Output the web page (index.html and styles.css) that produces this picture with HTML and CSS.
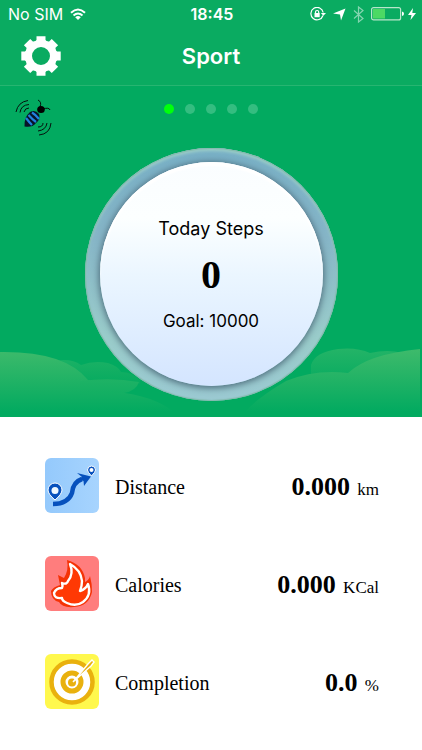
FILE: index.html
```html
<!DOCTYPE html>
<html lang="en">
<head>
<meta charset="utf-8">
<meta name="viewport" content="width=device-width, initial-scale=1">
<title>Sport</title>
<link rel="stylesheet" href="styles.css">
</head>
<body>
<header class="header">
  <div class="status">
    <div class="status-left">
      <span>No SIM</span>
      <svg width="16" height="13" viewBox="0 0 16 13" fill="none" stroke="#fff" stroke-width="2" aria-hidden="true">
        <path d="M1 4.700Q8-1.700 15 4.700M3.500 7.500Q8 3.500 12.500 7.500"/>
        <path d="M5.200 9.200Q8 6.800 10.800 9.200L8 12z" fill="#fff" stroke="none"/>
      </svg>
    </div>
    <span class="status-time">18:45</span>
    <div class="status-right">
      <svg width="16" height="14" viewBox="0 0 16 14" fill="none" stroke="#fff" stroke-width="1.200" aria-hidden="true">
        <path d="M13 8.500A6.200 6.200 0 1 1 13.200 5.500"/>
        <path d="M10.800 6H16L13.400 8.800z" fill="#fff" stroke="none"/>
        <rect x="4.500" y="6" width="5.200" height="4.200" fill="#fff" stroke="none"/>
        <path d="M5.500 6.200V5Q5.500 3.500 7.100 3.500T8.700 5V6.200"/>
      </svg>
      <svg width="13" height="13" viewBox="0 0 13 13" fill="#fff" aria-hidden="true"><path d="M12.500.5L8 12.500 7 6.400 0 5.600z"/></svg>
      <svg class="dim" width="11" height="17" viewBox="0 0 11 17" fill="none" stroke="#fff" stroke-width="1.200" aria-hidden="true"><path d="M1 4.500L10 12.500 5.500 16V1L10 4.500 1 12.500"/></svg>
      <svg class="battery" width="34" height="14" viewBox="0 0 34 14" aria-hidden="true">
        <rect x=".6" y=".6" width="29" height="12.300" rx="2" fill="none" stroke="#b8e6ca" stroke-width="1.200"/>
        <rect x="2" y="2" width="12" height="9.500" fill="#4cd964"/>
        <path d="M31 4.500Q33 5 33 6.800T31 9z" fill="#fff"/>
      </svg>
      <svg width="8" height="12" viewBox="0 0 8 12" fill="#fff" aria-hidden="true"><path d="M5 0L0 7H3.500L2.500 12 8 5H4.300z"/></svg>
    </div>
  </div>
  <nav class="nav">
    <button class="icon-button" type="button" aria-label="Settings">
      <svg width="40" height="40" viewBox="-20 -20 40 40" aria-hidden="true">
        <circle r="12.500" fill="none" stroke="#fff" stroke-width="7"/>
        <g fill="#fff">
          <path id="tooth" d="M-6.500-14L-4.500-16V-19.700H4.500V-16L6.500-14z"/>
          <use href="#tooth" transform="rotate(45)"/><use href="#tooth" transform="rotate(90)"/>
          <use href="#tooth" transform="rotate(135)"/><use href="#tooth" transform="rotate(180)"/>
          <use href="#tooth" transform="rotate(225)"/><use href="#tooth" transform="rotate(270)"/>
          <use href="#tooth" transform="rotate(315)"/>
        </g>
      </svg>
    </button>
    <h1 class="title">Sport</h1>
  </nav>
</header>

<main>
  <section class="hero">
    <svg class="hills" viewBox="0 0 422 75" preserveAspectRatio="none" aria-hidden="true">
      <defs>
        <linearGradient id="front" gradientUnits="userSpaceOnUse" x1="0" y1="8" x2="0" y2="70"><stop offset="0" stop-color="#3dba6b"/><stop offset=".5" stop-color="#20b265"/><stop offset="1" stop-color="#02aa60"/></linearGradient>
        <linearGradient id="back" gradientUnits="userSpaceOnUse" x1="0" y1="5" x2="0" y2="42"><stop offset="0" stop-color="#25b467"/><stop offset="1" stop-color="#06ab60"/></linearGradient>
        <linearGradient id="lobe" gradientUnits="userSpaceOnUse" x1="0" y1="37" x2="0" y2="56"><stop offset="0" stop-color="#1fb265"/><stop offset="1" stop-color="#0fae62"/></linearGradient>
      </defs>
      <path fill="url(#back)" d="M50 20Q70 15 81 23Q94 18 108 21Q118 24 121 30Q132 30 140 38V42H50zM311 23Q315 10 338 7Q357 5 370 11Q395 5 416 16V45H311z"/>
      <path fill="url(#front)" d="M0 10Q65 9 88 38L125 51Q160 56 180 75H0zM240 75Q255 57 286 39Q315 27 348 31Q368 12 420 7V75z"/>
      <path fill="url(#lobe)" d="M80 39Q112 35 139 40Q136 49 124 51L80 53z"/>
    </svg>
    <div class="hero-top">
      <button class="icon-button" type="button" aria-label="Bee">
        <svg width="38" height="38" viewBox="0 0 38 38" fill="none" stroke="#06100c" stroke-width="1" aria-hidden="true">
          <path d="M1 14Q3 4 13 2.500M5 14.500Q6 7 14 6.500M9 14Q10 10 14 10"/>
          <path d="M36 25Q35 36 24 37M32 25Q31 32 23 33M28 25Q28 29 23 29M23 2Q27 4 25 9M28 11Q34 9 35 12"/>
          <ellipse cx="26" cy="11.500" rx="3.800" ry="3.600" fill="#000" stroke="none"/>
          <path d="M15 14Q20 11 24 16Q26 21 21 25Q17 30 9.500 28.500Q9 19 15 14z" fill="#081428" stroke="none"/>
          <path d="M17 14.500Q21 17 24 21M13.500 17Q17 21 21 24M11 20Q14 24 17 27" stroke="#2180de" stroke-width="2.200"/>
        </svg>
      </button>
      <div class="dots" aria-hidden="true">
        <span class="dot dot-active"></span><span class="dot"></span><span class="dot"></span><span class="dot"></span><span class="dot"></span>
      </div>
    </div>
    <div class="dial">
      <div class="dial-face">
        <p class="dial-text">Today Steps</p>
        <p class="dial-value">0</p>
        <p class="dial-text dial-goal">Goal: 10000</p>
      </div>
    </div>
  </section>

  <section class="stats">
    <div class="stat">
      <svg class="stat-icon" viewBox="0 0 54 55" aria-hidden="true">
        <defs><linearGradient id="sky"><stop offset="0" stop-color="#94c9fc"/><stop offset="1" stop-color="#a7d4fe"/></linearGradient></defs>
        <rect width="54" height="55" rx="6" fill="url(#sky)"/>
        <path d="M8 46Q23 46 27 35Q28 24 37 21" fill="none" stroke="#0751bd" stroke-width="4.500"/>
        <path d="M32 15L46 18.500 39 28 38.500 23 34 21 37 19z" fill="#0751bd"/>
        <g fill="#0751bd" stroke="#fff" stroke-width="1">
          <path d="M10 42Q3 36 3 32A7 7 0 0 1 17 32Q17 36 10 42z"/><circle cx="10" cy="32.500" r="3.500" fill="#eff8ff" stroke="none"/>
          <path d="M46.500 18Q42.500 14 42.500 12A4 4 0 0 1 50.500 12Q50.500 14 46.500 18z"/><circle cx="46.500" cy="12" r="2" fill="#fff" stroke="none"/>
        </g>
      </svg>
      <h2 class="stat-name">Distance</h2>
      <p class="stat-value"><strong>0.000</strong> km</p>
    </div>
    <div class="stat">
      <svg class="stat-icon" viewBox="0 0 54 55" aria-hidden="true">
        <rect width="54" height="55" rx="6" fill="#ff7d7d"/>
        <path d="M22 4Q37 8 40 22L40 26Q44 24 45 20Q47 27 47 36Q44 50 29 51Q17 52 14 46Q6 44 6 35Q8 31 15 29L13 19 19 22Q24 14 22 4z" fill="#f53205"/>
        <path d="M25 8Q36 14 37 25Q37 30 35 35Q41 33 43 28Q47 39 38 46Q31 51 22 47Q17 45 17 42Q9 43 9 37Q11 32 17 32Q18 30 17 27Q22 29 23 25Q29 18 25 8z" fill="#ff3904" stroke="#fff" stroke-width="2.400" stroke-linejoin="round"/>
      </svg>
      <h2 class="stat-name">Calories</h2>
      <p class="stat-value"><strong>0.000</strong> KCal</p>
    </div>
    <div class="stat">
      <svg class="stat-icon" viewBox="0 0 54 55" aria-hidden="true">
        <rect width="54" height="55" rx="6" fill="#fff84d"/>
        <circle cx="27" cy="28" r="20.500" fill="#fff" stroke="#e9b10e" stroke-width="4.500"/>
        <circle cx="27" cy="28" r="9" fill="#fff" stroke="#e9b10e" stroke-width="5"/>
        <circle cx="27" cy="28.500" r="4" fill="#e9b10e"/>
        <path d="M28 28L43 10 47 6 49 8 46 12z" fill="#e9b10e" stroke="#fff" stroke-width="1.400"/>
      </svg>
      <h2 class="stat-name">Completion</h2>
      <p class="stat-value"><strong>0.0</strong> %</p>
    </div>
  </section>
</main>
</body>
</html>
```
FILE: styles.css
```css
* {
  box-sizing: border-box;
}

body {
  margin: 0;
  background: #fff;
  color: #000;
  font-family: Inter, "Liberation Sans", sans-serif;
}

h1,
h2,
p {
  margin: 0;
  font-weight: 400;
}

svg {
  display: block;
}

.header {
  background: #0aab61;
  border-bottom: 1px solid #27b571;
  color: #fff;
}

.status {
  display: grid;
  grid-template-columns: 1fr auto 1fr;
  align-items: center;
  height: 28px;
  padding: 0 6px 0 8px;
  font-size: 16px;
}

.status-left,
.status-right {
  display: flex;
  align-items: center;
  gap: 7px;
}

.status-right {
  justify-content: flex-end;
}

.status-time {
  font-weight: 600;
}

.dim {
  opacity: 0.5;
}

.battery {
  margin-right: -4px;
}

.nav {
  display: grid;
  grid-template-columns: 1fr auto 1fr;
  align-items: center;
  height: 57px;
  padding: 0 21px 2px;
}

.icon-button {
  justify-self: start;
  padding: 0;
  border: 0;
  background: none;
}

.title {
  font-size: 22px;
  font-weight: 600;
}

.hero {
  position: relative;
  padding-bottom: 16px;
  background: #02aa60;
}

.hills {
  position: absolute;
  bottom: 0;
  left: 0;
  width: 100%;
  height: 75px;
}

.hero-top {
  display: grid;
  grid-template-columns: 1fr auto 1fr;
  align-items: start;
  height: 62px;
  padding: 12px 15px 0;
}

.dots {
  display: flex;
  gap: 11px;
  padding-top: 6px;
}

.dot {
  width: 10px;
  height: 10px;
  border-radius: 50%;
  background: #34bd80;
}

.dot-active {
  background: #00ff0c;
}

.dial {
  position: relative;
  width: 253px;
  margin: 0 auto;
  padding: 14px 15px 15px;
  border-radius: 50%;
  background: linear-gradient(#78b0c6, #86b5c7 35%, #9accca 75%, #9bc9d2);
  box-shadow: inset 0 0 1px 1px #83b9ac, inset 0 3px 3px #9bcdc8;
}

.dial-face {
  display: flex;
  flex-direction: column;
  align-items: center;
  height: 224px;
  padding-top: 55px;
  border-radius: 50%;
  background: linear-gradient(#fafdff, #fcffff 25%, #ebf6ff 50%, #d4e5ff);
  box-shadow: 0 1px 7px 1px #4c6a7a, inset 0 4px 2px #fff;
}

.dial-text {
  font-size: 18px;
  line-height: 24px;
}

.dial-value {
  font-family: "Liberation Serif", serif;
  font-size: 40px;
  font-weight: 700;
  line-height: 68px;
}

.dial-goal {
  font-size: 17px;
}

.stats {
  display: grid;
  gap: 43px;
  padding: 41px 43px 41px 45px;
  font-family: "Liberation Serif", serif;
}

.stat {
  display: flex;
  align-items: center;
}

.stat-icon {
  width: 54px;
  height: 55px;
  margin-right: 16px;
}

.stat-name,
.stat-value {
  padding-top: 3px;
}

.stat-name {
  font-size: 20px;
}

.stat-value {
  margin-left: auto;
  font-size: 17px;
}

.stat-value strong {
  margin-right: 3px;
  font-size: 26px;
}
```
